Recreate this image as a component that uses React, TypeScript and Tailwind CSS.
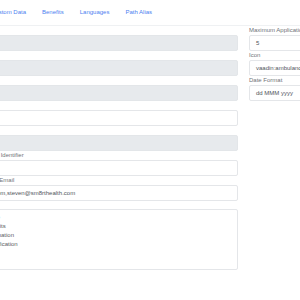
const tabs = ['Custom Data', 'Benefits', 'Languages', 'Path Alias']

type Field = { label: string; value?: string; disabled?: boolean }

const leftFields: Field[] = [
  { label: 'Code', disabled: true },
  { label: 'Name', disabled: true },
  { label: 'Type', disabled: true },
  { label: 'Title' },
  { label: 'Parent', disabled: true },
  { label: 'External Identifier' },
  { label: 'Contact Email', value: 'ath.com,steven@sm8rthealth.com' },
]

const rightFields: Field[] = [
  { label: 'Maximum Applications', value: '5' },
  { label: 'Icon', value: 'vaadin:ambulance' },
  { label: 'Date Format', value: 'dd MMM yyyy' },
]

function FormField({ label, value, disabled }: Field) {
  return (
    <div className="flex flex-col">
      <label className="h-[9px] text-[6px] leading-[9px] text-[#707378] whitespace-nowrap">{label}</label>
      <div
        className={`h-[16px] rounded-[2px] border px-[6px] text-[6px] leading-[14px] text-[#50555b] whitespace-nowrap overflow-hidden ${
          disabled ? 'bg-[#e7eaed] border-[#e3e6e9]' : 'bg-white border-[#e4e6e9]'
        }`}
      >
        {value}
      </div>
    </div>
  )
}

export default function App() {
  return (
    <div
      className="w-[300px] h-[300px] overflow-hidden bg-white"
      style={{ fontFamily: '"Liberation Sans", Arial, sans-serif' }}
    >
      {/* Tabs */}
      <div className="h-[26px] border-b border-[#eff1f3] flex items-center -ml-[17px] w-[400px]">
        {tabs.map((tab) => (
          <span key={tab} className="px-2 text-[6px] text-[#4d7ff0] whitespace-nowrap">
            {tab}
          </span>
        ))}
      </div>

      {/* Form */}
      <div className="flex gap-[11px] -ml-[23px] w-[420px]">
        <div className="w-[261px] shrink-0 flex flex-col">
          {leftFields.map((f) => (
            <FormField key={f.label} {...f} />
          ))}
          <div className="flex flex-col">
            <label className="h-[8px] text-[6px] leading-[8px] text-[#707378]">Modules</label>
            <div className="h-[61px] rounded-[2px] border border-[#e4e6e9] px-[6px] py-[3px] text-[6px] leading-[9px] text-[#5c6166] whitespace-nowrap">
              <div>Home</div>
              <div>Benefits</div>
              <div>Information</div>
              <div>Identification</div>
            </div>
          </div>
        </div>
        <div className="w-[120px] shrink-0 flex flex-col">
          {rightFields.map((f) => (
            <FormField key={f.label} {...f} />
          ))}
        </div>
      </div>
    </div>
  )
}
